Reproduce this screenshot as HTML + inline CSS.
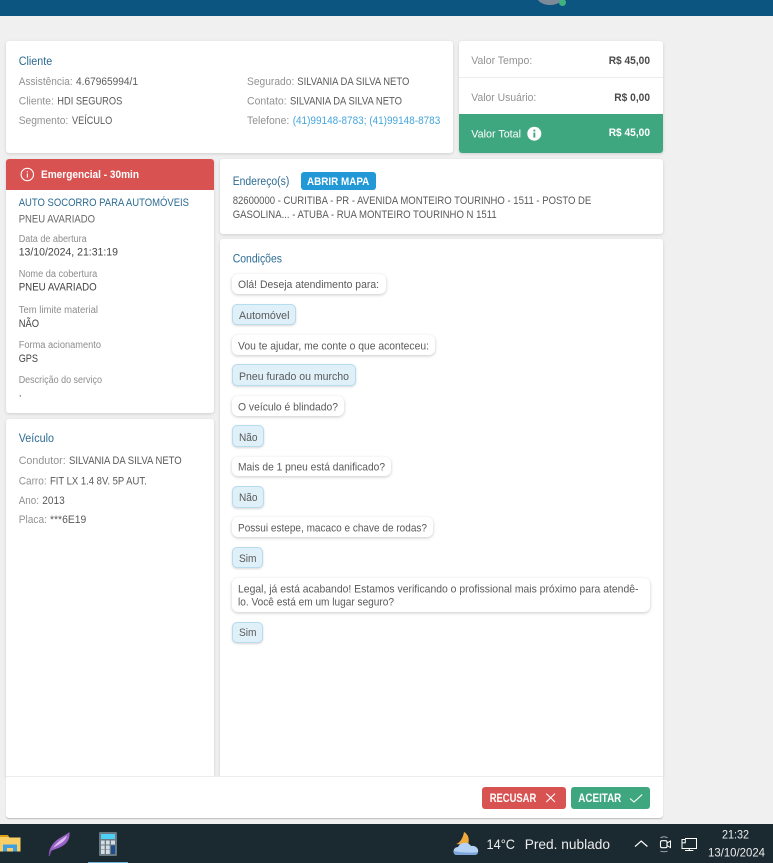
<!DOCTYPE html>
<html lang="pt-BR"><head><meta charset="utf-8"><title>Assistência</title>
<style>
html,body{margin:0;padding:0;width:773px;height:863px;overflow:hidden;background:#f0f0f0}
.b{position:absolute;box-sizing:border-box}
.card{background:#fff;border-radius:3px;box-shadow:0 1px 3px rgba(0,0,0,.14)}
.q{background:#fff;border-radius:6px;box-shadow:0 1px 3px rgba(0,0,0,.22);left:232px}
.a{background:#dff0f8;border:1px solid #b6dcee;border-radius:5px;box-shadow:0 1px 2px rgba(0,0,0,.16);left:232px}
svg.o{position:absolute;left:0;top:0}
svg text{font-family:"Liberation Sans",sans-serif;font-size:11px;fill:#5a5a5a}
.l{fill:#929292}.t{fill:#2b6b93;font-size:11.5px}.s{font-size:10px;fill:#8c8c8c}
.w{fill:#fff}.bd{font-weight:bold}.lk{fill:#45a6dc}.tb{fill:#ececec}
.d{fill:#444}
</style></head><body>
<div class="b" style="left:0;top:0;width:773px;height:16px;background:#0b5580;overflow:hidden">
<div class="b" style="left:536px;top:-15px;width:28px;height:20px;border-radius:50%;background:#7d8a9a"></div>
<div class="b" style="left:559px;top:-1px;width:7px;height:7px;border-radius:50%;background:#3fb27f"></div></div>

<div class="b card" style="left:6px;top:41px;width:447px;height:112px"></div>
<div class="b card" style="left:459px;top:41px;width:204px;height:112px;overflow:hidden">
<div class="b" style="left:0;top:36px;width:204px;height:1px;background:#ececec"></div>
<div class="b" style="left:0;top:73px;width:204px;height:39px;background:#3fa77f"></div></div>
<div class="b card" style="left:6px;top:159px;width:208px;height:254px;overflow:hidden">
<div class="b" style="left:0;top:0;width:208px;height:31px;background:#d95252"></div></div>
<div class="b card" style="left:220px;top:159px;width:443px;height:75px"></div>
<div class="b card" style="left:220px;top:239px;width:443px;height:538px;border-radius:3px 3px 0 0"></div>
<div class="b card" style="left:6px;top:419px;width:208px;height:358px;border-radius:3px 3px 0 0"></div>
<div class="b" style="left:6px;top:776px;width:657px;height:42px;background:#fff;border-top:1px solid #ececec;box-shadow:0 1px 1px rgba(0,0,0,.22);border-radius:0 0 3px 3px"></div>
<div class="b" style="left:301px;top:172px;width:75px;height:18px;background:#2299d6;border-radius:3px"></div>

<div class="b q" style="top:274px;width:154px;height:20px"></div>
<div class="b a" style="top:304px;width:64px;height:21px"></div>
<div class="b q" style="top:335px;width:203px;height:20px"></div>
<div class="b a" style="top:364px;width:124px;height:22px"></div>
<div class="b q" style="top:396px;width:112px;height:20px"></div>
<div class="b a" style="top:425px;width:32px;height:22px"></div>
<div class="b q" style="top:457px;width:159px;height:19px"></div>
<div class="b a" style="top:486px;width:32px;height:22px"></div>
<div class="b q" style="top:517px;width:201px;height:20px"></div>
<div class="b a" style="top:547px;width:31px;height:21px"></div>
<div class="b q" style="top:578px;width:418px;height:34px"></div>
<div class="b a" style="top:622px;width:31px;height:21px"></div>

<div class="b" style="left:482px;top:787px;width:84px;height:22px;background:#d95252;border-radius:3px"></div>
<div class="b" style="left:571px;top:787px;width:79px;height:22px;background:#3fa77f;border-radius:3px"></div>
<div class="b" style="left:0;top:824px;width:773px;height:39px;background:#1b2a30"></div>
<div class="b" style="left:88px;top:862px;width:40px;height:1px;background:#6fb3e0"></div>

<svg class="o" width="773" height="863" viewBox="0 0 773 863" xmlns="http://www.w3.org/2000/svg">
<text class="t" x="18.7" y="65" textLength="33.5" lengthAdjust="spacingAndGlyphs">Cliente</text>
<text class="l" x="18.7" y="85" textLength="54" lengthAdjust="spacingAndGlyphs">Assistência:</text>
<text x="76" y="85" textLength="62" lengthAdjust="spacingAndGlyphs">4.67965994/1</text>
<text class="l" x="18.7" y="104.5" textLength="35.3" lengthAdjust="spacingAndGlyphs">Cliente:</text>
<text x="57.3" y="104.5" textLength="65" lengthAdjust="spacingAndGlyphs">HDI SEGUROS</text>
<text class="l" x="18.7" y="124" textLength="49.6" lengthAdjust="spacingAndGlyphs">Segmento:</text>
<text x="72" y="124" textLength="40.3" lengthAdjust="spacingAndGlyphs">VEÍCULO</text>
<text class="l" x="247" y="85" textLength="47.3" lengthAdjust="spacingAndGlyphs">Segurado:</text>
<text x="297.3" y="85" textLength="112" lengthAdjust="spacingAndGlyphs">SILVANIA DA SILVA NETO</text>
<text class="l" x="247" y="104.5" textLength="39.7" lengthAdjust="spacingAndGlyphs">Contato:</text>
<text x="290" y="104.5" textLength="112" lengthAdjust="spacingAndGlyphs">SILVANIA DA SILVA NETO</text>
<text class="l" x="247" y="124" textLength="42.3" lengthAdjust="spacingAndGlyphs">Telefone:</text>
<text class="lk" x="292.7" y="124" textLength="147.6" lengthAdjust="spacingAndGlyphs">(41)99148-8783; (41)99148-8783</text>

<text class="l" x="471.3" y="64" textLength="61" lengthAdjust="spacingAndGlyphs">Valor Tempo:</text>
<text class="bd" x="608.7" y="64" textLength="41.3" lengthAdjust="spacingAndGlyphs" style="fill:#4a4a4a">R$ 45,00</text>
<text class="l" x="471.3" y="101" textLength="65" lengthAdjust="spacingAndGlyphs">Valor Usuário:</text>
<text class="bd" x="614.3" y="101" textLength="35.7" lengthAdjust="spacingAndGlyphs" style="fill:#4a4a4a">R$ 0,00</text>
<text class="w" x="471.3" y="137.7" textLength="49.7" lengthAdjust="spacingAndGlyphs">Valor Total</text>
<circle cx="534.3" cy="133.7" r="7" fill="#fff"/><rect x="533.4" y="132.6" width="1.9" height="5" fill="#3fa77f"/><rect x="533.4" y="129.6" width="1.9" height="1.9" fill="#3fa77f"/>
<text class="w bd" x="608.7" y="136" textLength="41.3" lengthAdjust="spacingAndGlyphs">R$ 45,00</text>

<circle cx="27.3" cy="174.5" r="6.2" fill="none" stroke="#fff" stroke-width="1.1"/><rect x="26.8" y="173.6" width="1.1" height="4" fill="#fff"/><rect x="26.8" y="171.2" width="1.1" height="1.2" fill="#fff"/>
<text class="w bd" x="41" y="178" textLength="98" lengthAdjust="spacingAndGlyphs">Emergencial - 30min</text>
<text class="t" style="font-size:11px" x="18.7" y="206" textLength="170.3" lengthAdjust="spacingAndGlyphs">AUTO SOCORRO PARA AUTOMÓVEIS</text>
<text x="18.7" y="222.7" textLength="76.3" lengthAdjust="spacingAndGlyphs" style="fill:#666">PNEU AVARIADO</text>
<text class="s" x="18.7" y="242" textLength="68" lengthAdjust="spacingAndGlyphs">Data de abertura</text>
<text class="d" x="18.7" y="255.7" textLength="99.3" lengthAdjust="spacingAndGlyphs">13/10/2024, 21:31:19</text>
<text class="s" x="18.7" y="277" textLength="78.6" lengthAdjust="spacingAndGlyphs">Nome da cobertura</text>
<text class="d" x="18.7" y="290.7" textLength="78" lengthAdjust="spacingAndGlyphs">PNEU AVARIADO</text>
<text class="s" x="18.7" y="313" textLength="79.3" lengthAdjust="spacingAndGlyphs">Tem limite material</text>
<text class="d" x="18.7" y="327" textLength="20.3" lengthAdjust="spacingAndGlyphs">NÃO</text>
<text class="s" x="18.7" y="348" textLength="82.3" lengthAdjust="spacingAndGlyphs">Forma acionamento</text>
<text class="d" x="18.7" y="362" textLength="19.3" lengthAdjust="spacingAndGlyphs">GPS</text>
<text class="s" x="18.7" y="383" textLength="83.3" lengthAdjust="spacingAndGlyphs">Descrição do serviço</text>
<text class="d" x="18.7" y="396.7">.</text>

<text class="t" x="18.7" y="442" textLength="35.3" lengthAdjust="spacingAndGlyphs">Veículo</text>
<text class="l" x="18.7" y="464" textLength="47" lengthAdjust="spacingAndGlyphs">Condutor:</text>
<text x="69" y="464" textLength="112.7" lengthAdjust="spacingAndGlyphs">SILVANIA DA SILVA NETO</text>
<text class="l" x="18.7" y="484.3" textLength="28" lengthAdjust="spacingAndGlyphs">Carro:</text>
<text x="50" y="484.3" textLength="96.7" lengthAdjust="spacingAndGlyphs">FIT LX 1.4 8V. 5P AUT.</text>
<text class="l" x="18.7" y="504" textLength="20.3" lengthAdjust="spacingAndGlyphs">Ano:</text>
<text x="42.3" y="504" textLength="22.4" lengthAdjust="spacingAndGlyphs">2013</text>
<text class="l" x="18.7" y="523" textLength="28.3" lengthAdjust="spacingAndGlyphs">Placa:</text>
<text x="50" y="523" textLength="36.3" lengthAdjust="spacingAndGlyphs">***6E19</text>

<text class="t" x="232.7" y="185" textLength="56.6" lengthAdjust="spacingAndGlyphs">Endereço(s)</text>
<text class="w bd" x="307" y="185" textLength="62.3" lengthAdjust="spacingAndGlyphs">ABRIR MAPA</text>
<text x="232.7" y="204" textLength="358.6" lengthAdjust="spacingAndGlyphs">82600000 - CURITIBA - PR - AVENIDA MONTEIRO TOURINHO - 1511 - POSTO DE</text>
<text x="232.7" y="218" textLength="264" lengthAdjust="spacingAndGlyphs">GASOLINA... - ATUBA - RUA MONTEIRO TOURINHO N 1511</text>

<text class="t" x="232.7" y="262.7" textLength="49.3" lengthAdjust="spacingAndGlyphs">Condições</text>
<text x="238" y="288" textLength="141" lengthAdjust="spacingAndGlyphs">Olá! Deseja atendimento para:</text>
<text x="239" y="319" textLength="50.5" lengthAdjust="spacingAndGlyphs">Automóvel</text>
<text x="238" y="349.5" textLength="191" lengthAdjust="spacingAndGlyphs">Vou te ajudar, me conte o que aconteceu:</text>
<text x="239" y="380" textLength="110" lengthAdjust="spacingAndGlyphs">Pneu furado ou murcho</text>
<text x="238" y="410.5" textLength="100" lengthAdjust="spacingAndGlyphs">O veículo é blindado?</text>
<text x="239" y="441" textLength="18.5" lengthAdjust="spacingAndGlyphs">Não</text>
<text x="238" y="470.7" textLength="147" lengthAdjust="spacingAndGlyphs">Mais de 1 pneu está danificado?</text>
<text x="239" y="501" textLength="18.5" lengthAdjust="spacingAndGlyphs">Não</text>
<text x="238" y="531.5" textLength="189" lengthAdjust="spacingAndGlyphs">Possui estepe, macaco e chave de rodas?</text>
<text x="239" y="562" textLength="17.5" lengthAdjust="spacingAndGlyphs">Sim</text>
<text x="238" y="592.5" textLength="400.5" lengthAdjust="spacingAndGlyphs">Legal, já está acabando! Estamos verificando o profissional mais próximo para atendê-</text>
<text x="238" y="605.7" textLength="156" lengthAdjust="spacingAndGlyphs">lo. Você está em um lugar seguro?</text>
<text x="239" y="636" textLength="17.5" lengthAdjust="spacingAndGlyphs">Sim</text>

<text class="w bd" style="font-size:11.5px" x="489.7" y="802" textLength="46.6" lengthAdjust="spacingAndGlyphs">RECUSAR</text>
<path d="M546.3 793.6L555 802M555 793.6L546.3 802" stroke="#fff" stroke-width="1.1" fill="none"/>
<text class="w bd" style="font-size:11.5px" x="578.3" y="802" textLength="43" lengthAdjust="spacingAndGlyphs">ACEITAR</text>
<path d="M630 798.5L634 802L642.2 794.5" stroke="#fff" stroke-width="1.1" fill="none"/>

<!-- folder -->
<path d="M0 836H8L9.5 837.500H20.500V851.500H0Z" fill="#f8cf66"/><path d="M0 835H8L9 837H0Z" fill="#d9a016"/>
<path d="M3 851.500V844.500H17V851.500H13V848H7V851.500Z" fill="#3f9fe0"/>
<!-- feather -->
<path d="M49 855.500C48.500 849 53 842 60 838C63 836 67 834 69.500 832C70 838 68 842 64 845C60 848 55 849 51 851Z" fill="#9a62c8"/>
<path d="M53 848C57 842 62 839 67 835.500C66 840 62 843 58 845Z" fill="#d8bdf0"/>
<path d="M49 856L51 851" stroke="#7a45a8" stroke-width="1.200" fill="none"/>
<!-- calculator -->
<rect x="99" y="832" width="18" height="24" rx="1" fill="#6a7a85"/>
<rect x="101" y="834" width="14" height="5" fill="#4fd0f5"/>
<g fill="#d5dde2"><rect x="101" y="840.500" width="3.700" height="4"/><rect x="106" y="840.500" width="3.700" height="4"/><rect x="111" y="840.500" width="4" height="4"/><rect x="101" y="845.500" width="3.700" height="4"/><rect x="106" y="845.500" width="3.700" height="4"/><rect x="101" y="850" width="3.700" height="4"/><rect x="106" y="850" width="3.700" height="4"/></g>
<rect x="111" y="845.500" width="4" height="8.500" fill="#1c4f8c"/>
<!-- weather -->
<path d="M464 832C468 834 470 839 468 845L456 844C460 843 463 838 464 832Z" fill="#f2a93b"/>
<path d="M457 855C452 855 452.500 847 458 847C460 842 468 841 471 846C476 845 479 849 478 852C478 854 476 855 474 855Z" fill="#b4d2f4"/>
<path d="M457 855H474C476 855 478 854 478 852C472 853 462 853 454 851C453.500 853 454 855 457 855Z" fill="#7ba6dc"/>
<text class="tb" style="font-size:14px" x="486.500" y="849" textLength="28.500" lengthAdjust="spacingAndGlyphs">14°C</text>
<text class="tb" style="font-size:14px" x="524.700" y="849" textLength="85.300" lengthAdjust="spacingAndGlyphs">Pred. nublado</text>
<path d="M635 846.500L641.200 841L647.400 846.500" stroke="#fff" stroke-width="1.200" fill="none"/>
<rect x="660.500" y="840.700" width="6.500" height="7" rx="1.500" fill="none" stroke="#fff" stroke-width="1.100"/>
<path d="M667 843L670.500 841V847.500L667 845.500" fill="none" stroke="#fff" stroke-width="1"/>
<path d="M660.500 837.700Q664 836 667.500 837.700M660.500 851Q664 852.700 667.500 851" stroke="#bbb" stroke-width=".9" fill="none"/>
<path d="M685 838.500H696.500V848.500H682V843" fill="none" stroke="#fff" stroke-width="1"/>
<rect x="682" y="839.500" width="3.300" height="3.300" fill="none" stroke="#fff" stroke-width="1"/>
<path d="M689.300 848.500V850.500M685 850.500H693.300" stroke="#fff" stroke-width="1" fill="none"/>
<text class="tb" style="font-size:12px" x="722" y="838.700" textLength="27" lengthAdjust="spacingAndGlyphs">21:32</text>
<text class="tb" style="font-size:12px" x="708" y="856.700" textLength="57" lengthAdjust="spacingAndGlyphs">13/10/2024</text>
</svg>
</body></html>
